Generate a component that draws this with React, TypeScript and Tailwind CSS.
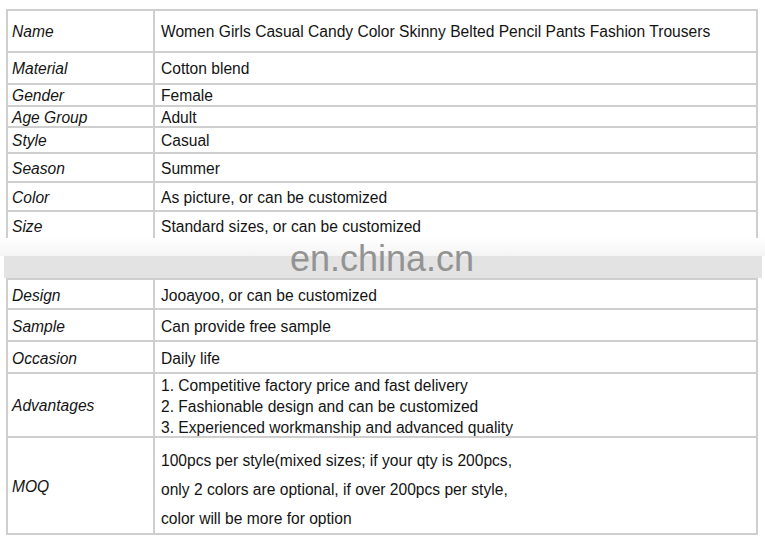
const topRows: { label: string; value: string; h: string }[] = [
  { label: "Name", value: "Women Girls Casual Candy Color Skinny Belted Pencil Pants Fashion Trousers", h: "h-[42px]" },
  { label: "Material", value: "Cotton blend", h: "h-[32px]" },
  { label: "Gender", value: "Female", h: "h-[22px]" },
  { label: "Age Group", value: "Adult", h: "h-[21px]" },
  { label: "Style", value: "Casual", h: "h-[26px]" },
  { label: "Season", value: "Summer", h: "h-[29px]" },
  { label: "Color", value: "As picture, or can be customized", h: "h-[29px]" },
];

const bottomRows: { label: string; lines: string[]; h: string; lead: string; pad?: string }[] = [
  { label: "Design", lines: ["Jooayoo, or can be customized"], h: "h-[30px]", lead: "leading-[20px]" },
  { label: "Sample", lines: ["Can provide free sample"], h: "h-[32px]", lead: "leading-[20px]" },
  { label: "Occasion", lines: ["Daily life"], h: "h-[32px]", lead: "leading-[20px]" },
  {
    label: "Advantages",
    lines: [
      "1. Competitive factory price and fast delivery",
      "2. Fashionable design and can be customized",
      "3. Experienced workmanship and advanced quality",
    ],
    h: "h-[64px]",
    lead: "leading-[21px]",
  },
  {
    label: "MOQ",
    lines: [
      "100pcs per style(mixed sizes; if your qty is 200pcs,",
      "only 2 colors are optional, if over 200pcs per style,",
      "color will be more for option",
    ],
    h: "h-[95px]",
    lead: "leading-[29px]",
    pad: "pt-[6px]",
  },
];

const Row = ({
  label,
  children,
  h,
  last,
  shift = "pt-[2px]",
}: {
  label: string;
  children: React.ReactNode;
  h: string;
  last?: boolean;
  shift?: string;
}) => (
  <div className={`flex ${h} ${last ? "" : "border-b-2"} border-[#cfcfcf]`}>
    <div className={`w-[147px] shrink-0 border-r-2 border-[#cfcfcf] pl-[4px] flex items-center italic ${shift}`}>
      {label}
    </div>
    <div className={`flex-1 pl-[6px] flex items-center ${shift}`}>{children}</div>
  </div>
);

export default function App() {
  return (
    <div
      className="relative w-[765px] h-[541px] bg-white text-[15.6px] text-[#141414] overflow-hidden"
      style={{ fontFamily: '"Liberation Sans", Arial, sans-serif' }}
    >
      <div className="pt-[9px] pl-[6px]">
        <div className="w-[752px] border-x-2 border-t-2 border-[#cfcfcf]">
          {topRows.map((r) => (
            <Row key={r.label} label={r.label} h={r.h}>
              {r.value}
            </Row>
          ))}
          <Row label="Size" h="h-[26px]" last shift="pt-[4px]">
            Standard sizes, or can be customized
          </Row>
        </div>
      </div>

      <div className="h-[18px] bg-gradient-to-b from-white to-[#f4f4f4]" />
      <div className="ml-[4px] w-[758px] h-[22px] bg-[#e3e3e3]" />

      <div className="pl-[6px]">
        <div className="w-[752px] border-2 border-[#cfcfcf]">
          {bottomRows.map((r, i) => (
            <Row
              key={r.label}
              label={r.label}
              h={r.h}
              last={i === bottomRows.length - 1}
              shift={r.lines.length > 1 ? "pt-[2px]" : "pt-[3px]"}
            >
              <div className={`${r.lead} ${r.pad ?? ""}`}>
                {r.lines.map((l) => (
                  <div key={l}>{l}</div>
                ))}
              </div>
            </Row>
          ))}
        </div>
      </div>

      <div className="absolute left-0 top-[241px] w-[764px] text-center text-[36px] leading-[36px] text-[#939393]">
        en.china.cn
      </div>
    </div>
  );
}
